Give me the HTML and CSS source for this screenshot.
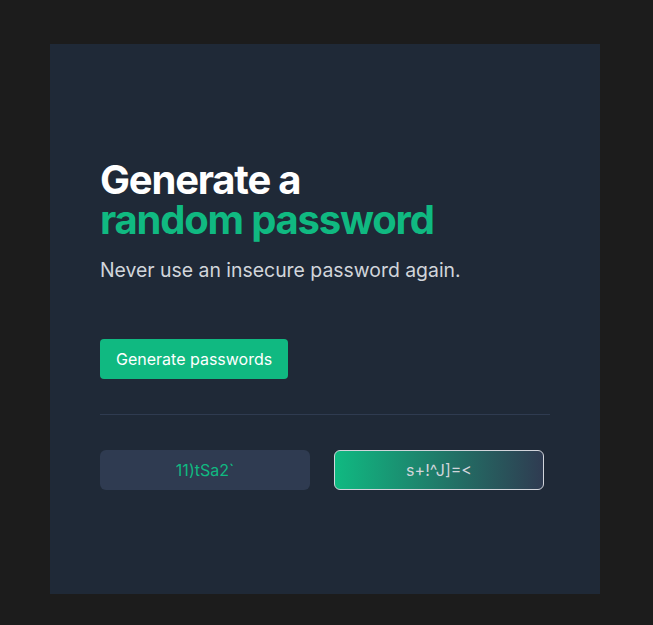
FILE: index.html
```html
<!DOCTYPE html>
<html lang="en">
<head>
<meta charset="utf-8">
<title>Password generator</title>
<link rel="stylesheet" href="styles.css">
</head>
<body>
<main class="card">
  <h1 class="title">Generate a<br><span class="accent">random password</span></h1>
  <p class="subtitle">Never use an insecure password again.</p>
  <div class="actions">
    <button class="btn">Generate passwords</button>
  </div>
  <hr class="divider">
  <div class="results">
    <div class="pw pw-plain">11)tSa2`</div>
    <div class="pw pw-active">s+!^J]=&lt;</div>
  </div>
</main>
</body>
</html>
```

FILE: styles.css
```css
* { box-sizing: border-box; }
html, body { margin: 0; padding: 0; background: #1c1c1c; }
body {
  padding: 44px 50px;
  font-family: Inter, "Noto Sans", "Liberation Sans", sans-serif;
}
.card {
  width: 550px;
  height: 550px;
  background: #1f2937;
  padding: 116px 50px 0 50px;
  display: flex;
  flex-direction: column;
}
.title {
  margin: 0;
  font-size: 40px;
  line-height: 40px;
  font-weight: 700;
  color: #ffffff;
  letter-spacing: -0.03em;
}
.accent { color: #10b981; }
.subtitle {
  margin: 16px 0 0 0;
  font-size: 19.4px;
  line-height: 28px;
  color: #d1d5db;
}
.actions { margin-top: 55px; display: flex; }
.btn {
  height: 40px;
  padding: 0 16px;
  border: none;
  border-radius: 4px;
  background: #10b981;
  color: #ffffff;
  font-family: inherit;
  font-size: 16px;
  font-weight: 400;
}
.divider {
  margin: 35px 0 0 0;
  border: none;
  height: 1px;
  background: #2f3b50;
}
.results {
  margin-top: 35px;
  display: flex;
  gap: 24px;
}
.pw {
  width: 210px;
  height: 40px;
  border-radius: 6px;
  display: flex;
  align-items: center;
  justify-content: center;
  font-size: 16px;
}
.pw-plain {
  background: #2f3b51;
  color: #10b981;
}
.pw-active {
  background: linear-gradient(90deg, #10b981 0%, #2f3b51 100%);
  border: 1px solid #d1d5db;
  color: #d1d5db;
}
```
